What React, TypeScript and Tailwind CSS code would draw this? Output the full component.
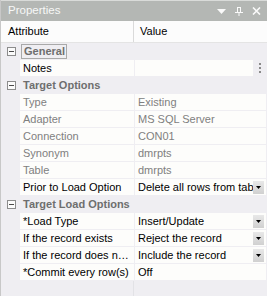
import React from "react";

type Row =
  | { kind: "cat"; label: string; focus?: boolean }
  | { kind: "prop"; label: string; value: string; ro?: boolean; dd?: boolean; dots?: boolean };

const rows: Row[] = [
  { kind: "cat", label: "General", focus: true },
  { kind: "prop", label: "Notes", value: "", dots: true },
  { kind: "cat", label: "Target Options" },
  { kind: "prop", label: "Type", value: "Existing", ro: true },
  { kind: "prop", label: "Adapter", value: "MS SQL Server", ro: true },
  { kind: "prop", label: "Connection", value: "CON01", ro: true },
  { kind: "prop", label: "Synonym", value: "dmrpts", ro: true },
  { kind: "prop", label: "Table", value: "dmrpts", ro: true },
  { kind: "prop", label: "Prior to Load Option", value: "Delete all rows from table", dd: true },
  { kind: "cat", label: "Target Load Options" },
  { kind: "prop", label: "*Load Type", value: "Insert/Update", dd: true },
  { kind: "prop", label: "If the record exists", value: "Reject the record", dd: true },
  { kind: "prop", label: "If the record does n\u2026", value: "Include the record", dd: true },
  { kind: "prop", label: "*Commit every row(s)", value: "Off" },
];

function MinusBox() {
  return (
    <div className="w-[9px] h-[9px] border border-[#8c8c8c] bg-[#fbfbfb] flex items-center justify-center shrink-0">
      <div className="w-[5px] h-[1px] bg-[#4a4a4a]" />
    </div>
  );
}

function DropBtn() {
  return (
    <div className="w-[11px] h-[13px] bg-gradient-to-b from-[#e8e8e8] to-[#d0d0d0] flex items-center justify-center shrink-0 mr-[2px]">
      <svg width="5" height="3" viewBox="0 0 5 3">
        <path d="M0 0H5L2.5 3Z" fill="#000" />
      </svg>
    </div>
  );
}

export default function App() {
  return (
    <div className="w-[267px] h-[296px] bg-[#efeef2] flex flex-col overflow-hidden font-['Liberation_Sans',Arial,sans-serif] text-[11px] leading-none border-l border-[#c8c8c8]">
      {/* Title bar */}
      <div className="h-[21px] shrink-0 bg-[#b4b7b4] border-t border-[#d9dbd9] flex items-center pl-[7px] pr-[6px] text-[#f7f7f7] text-[11.5px]">
        <span className="flex-1">Properties</span>
        <div className="flex items-center gap-[9px]">
          <svg width="9" height="5" viewBox="0 0 9 5">
            <path d="M0 0H9L4.5 5Z" fill="#fafafa" />
          </svg>
          <svg width="8" height="9" viewBox="0 0 8 9">
            <path d="M2 0.5H6M2.5 0.5V5.5M5.5 0.5V5.5M0 5.5H8M4 5.5V9" stroke="#fafafa" strokeWidth="1" fill="none" />
          </svg>
          <svg width="9" height="8" viewBox="0 0 9 8">
            <path d="M1 0.5L8 7.5M8 0.5L1 7.5" stroke="#fafafa" strokeWidth="1.6" />
          </svg>
        </div>
      </div>
      {/* Header */}
      <div className="h-[22px] shrink-0 bg-[#fcfcfc] border-b border-[#e4e4e4] flex text-black">
        <div className="w-[133px] border-r border-[#dadada] flex items-center pl-[7px]">Attribute</div>
        <div className="flex-1 flex items-center pl-[6px]">Value</div>
      </div>
      {/* Rows */}
      {rows.map((r, i) =>
        r.kind === "cat" ? (
          <div key={i} className="h-[17px] shrink-0 flex items-center">
            <div className="w-[19px] flex items-center pl-[6px]">
              <MinusBox />
            </div>
            <div
              className={
                "h-[15px] flex items-center font-bold text-[#6e6e6e] " +
                (r.focus ? "border border-[#a9a9a9] pl-[2px] pr-[1px] ml-[1px]" : "pl-[3px]")
              }
            >
              {r.label}
            </div>
          </div>
        ) : (
          <div key={i} className="h-[17px] shrink-0 flex pb-[1px]">
            <div className="w-[19px] shrink-0" />
            <div
              className={
                "w-[114px] shrink-0 bg-[#fdfdfb] flex items-center pl-[3px] whitespace-nowrap overflow-hidden " +
                (r.ro ? "text-[#808080]" : "text-black")
              }
            >
              {r.label}
            </div>
            <div className="w-[1px] shrink-0" />
            {r.dots ? (
              <>
                <div className="w-[118px] shrink-0 bg-[#fdfdfb]" />
                <div className="flex-1 flex flex-col items-center justify-center gap-[2px] pr-[1px]">
                  <div className="w-[2px] h-[2px] bg-[#8a8a8a]" />
                  <div className="w-[2px] h-[2px] bg-[#8a8a8a]" />
                  <div className="w-[2px] h-[2px] bg-[#8a8a8a]" />
                </div>
              </>
            ) : (
              <div className="flex-1 bg-[#fdfdfb] flex items-center mr-[1px] min-w-0">
                <div
                  className={
                    "flex-1 min-w-0 pl-[3px] whitespace-nowrap overflow-hidden " +
                    (r.ro ? "text-[#808080]" : "text-black")
                  }
                >
                  {r.value}
                </div>
                {r.dd && <DropBtn />}
              </div>
            )}
          </div>
        )
      )}
      {/* Empty filler */}
      <div className="flex-1 flex">
        <div className="w-[133px] border-r border-[#e2e2e6]" />
        <div className="flex-1" />
      </div>
    </div>
  );
}
